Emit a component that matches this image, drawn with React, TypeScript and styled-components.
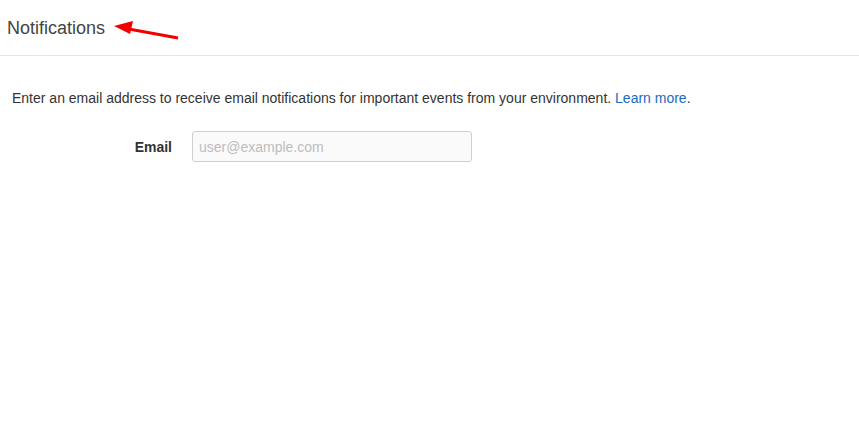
import React from "react";
import styled, { createGlobalStyle } from "styled-components";

const Global = createGlobalStyle`
  html, body { margin: 0; padding: 0; background: #fff; }
  body { font-family: "Liberation Sans", Arial, sans-serif; color: #333; }
`;

const Page = styled.div`
  position: relative;
  width: 859px;
  height: 426px;
`;

const Header = styled.header`
  height: 56px;
  border-bottom: 1px solid #e6e6e6;
  display: flex;
  align-items: center;
  padding: 0 7px;
  box-sizing: border-box;
`;

const Title = styled.h1`
  margin: 1px 0 0;
  font-size: 18px;
  font-weight: 400;
  color: #444;
`;

const Arrow = styled.svg`
  position: absolute;
  left: 110px;
  top: 18px;
`;

const Content = styled.main`
  padding: 32px 12px 0;
`;

const Description = styled.p`
  margin: 0;
  font-size: 14px;
  line-height: 20px;
  color: #333;
`;

const Link = styled.a`
  color: #1a6bbf;
  text-decoration: none;
`;

const FormRow = styled.div`
  display: flex;
  align-items: center;
  gap: 20px;
  margin-top: 23px;
`;

const Label = styled.label`
  width: 160px;
  text-align: right;
  font-size: 14px;
  font-weight: 700;
  color: #333;
`;

const Input = styled.input`
  width: 280px;
  height: 31px;
  box-sizing: border-box;
  border: 1px solid #cfcfcf;
  border-radius: 3px;
  background: #fafafa;
  padding: 0 6px;
  font-family: "Liberation Sans", Arial, sans-serif;
  font-size: 14px;
  color: #333;
  outline: none;
  &::placeholder { color: #bdbdbd; }
`;

export default function App() {
  return (
    <Page>
      <Global />
      <Header>
        <Title>Notifications</Title>
      </Header>
      <Arrow width="72" height="24" viewBox="0 0 72 24">
        <line x1="68" y1="20" x2="16" y2="10.5" stroke="#f20000" strokeWidth="3" />
        <polygon points="4,8 23,3 20,16" fill="#f20000" />
      </Arrow>
      <Content>
        <Description>
          Enter an email address to receive email notifications for important events from your environment.{" "}
          <Link href="#">Learn more</Link>.
        </Description>
        <FormRow>
          <Label htmlFor="email">Email</Label>
          <Input id="email" placeholder="user@example.com" />
        </FormRow>
      </Content>
    </Page>
  );
}
